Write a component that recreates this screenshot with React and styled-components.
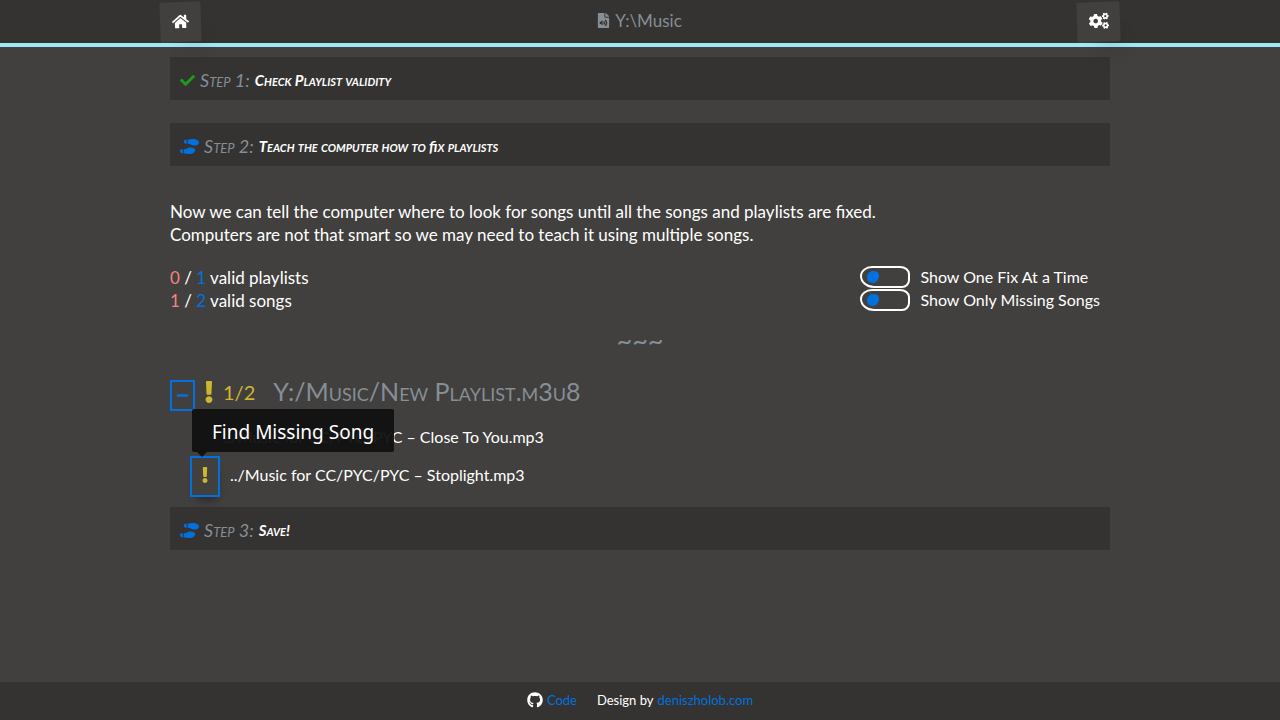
import React, { useState } from "react";
import styled, { createGlobalStyle, css } from "styled-components";
import {
  FaCheck,
  FaCogs,
  FaExclamation,
  FaFileAudio,
  FaGithub,
  FaHome,
  FaMinus,
  FaShoePrints,
} from "react-icons/fa";

const color = {
  page: "#41403e",
  bar: "#343331",
  line: "#9fe8f8",
  muted: "#868e96",
  blue: "#0071de",
  green: "#1f9a1f",
  red: "#f28482",
  yellow: "#cdb72a",
};

const GlobalStyle = createGlobalStyle`
  *, *::before, *::after { box-sizing: border-box; }
  body {
    margin: 0;
    background: ${color.page};
    color: #fff;
    font: 17px/23px Lato, sans-serif;
  }
  a { color: ${color.blue}; text-decoration: none; }
  svg { display: block; flex: none; }
`;

const Page = styled.div`
  display: flex;
  flex-direction: column;
  min-height: 100vh;
`;

const TopBar = styled.header`
  background: ${color.bar};
  border-bottom: 4px solid ${color.line};
`;

const TopBarInner = styled.div`
  display: flex;
  justify-content: space-between;
  align-items: center;
  max-width: 960px;
  height: 43px;
  margin: 0 auto;
`;

const BarButton = styled.button`
  display: flex;
  align-items: center;
  justify-content: center;
  width: ${(p) => (p.$wide ? 43 : 41)}px;
  height: 40px;
  padding: 0 0 2px;
  border: 0;
  border-radius: 2px;
  background: ${color.page};
  color: #fff;
  transform: rotate(-2deg);
  box-shadow: 12px 20px 20px -16px rgba(0, 0, 0, 0.4);
  cursor: pointer;
`;

const Location = styled.div`
  display: flex;
  align-items: center;
  gap: 4px;
  padding-bottom: 2px;
  color: ${color.muted};
`;

const Main = styled.main`
  flex: 1;
  width: 100%;
  max-width: 960px;
  margin: 0 auto;
  padding: 10px;
`;

const StepBar = styled.h2`
  display: flex;
  align-items: center;
  gap: 5px;
  height: 43px;
  margin: 0 0 ${(p) => (p.$last ? 0 : 23)}px;
  padding: 2px 10px 0;
  background: ${color.bar};
  font: italic 18px/24px Lato, sans-serif;
  font-variant-caps: small-caps;
  color: ${color.muted};
`;

const StepIcon = styled.span`
  display: flex;
  padding-top: 2px;
  color: ${(p) => p.$color};
`;

const StepName = styled.strong`
  font-size: 15px;
  color: #fff;
`;

const Ligature = styled.span`
  font-variant-caps: normal;
`;

const Intro = styled.p`
  margin: 34px 0 20px;
`;

const Summary = styled.div`
  display: flex;
  justify-content: space-between;
  padding-right: 10px;
`;

const Count = styled.span`
  color: ${(p) => p.$color};
`;

const Options = styled.div`
  display: flex;
  flex-direction: column;
`;

const Option = styled.label`
  display: flex;
  align-items: center;
  gap: 10px;
  height: 23px;
  padding-bottom: 2px;
  font-size: 16px;
  cursor: pointer;
`;

const Switch = styled.input`
  appearance: none;
  display: flex;
  align-items: center;
  width: 50px;
  height: 22px;
  margin: 0;
  padding: 0 5px;
  border: 2px solid #fff;
  border-radius: 12px 10px 8px 14px / 10px 8px 8px 12px;
  cursor: pointer;

  &::before {
    content: "";
    width: 12px;
    height: 12px;
    border-radius: 6px 5px 6px 7px / 7px 5px 8px 5px;
    background: ${color.blue};
  }

  &:checked { justify-content: flex-end; }
`;

const Divider = styled.div`
  margin: 16px 0 23px;
  color: ${color.muted};
  font-size: 27px;
  line-height: 24px;
  text-align: center;
`;

const PlaylistHead = styled.div`
  display: flex;
  align-items: center;
  height: 40px;
  margin-bottom: 6px;
`;

const outlined = css`
  display: flex;
  align-items: center;
  justify-content: center;
  flex: none;
  padding: 0;
  border: 2px solid ${color.blue};
  background: transparent;
  cursor: pointer;
`;

const CollapseButton = styled.button`
  ${outlined}
  width: 25px;
  height: 31px;
  margin-right: 3px;
  color: ${color.blue};
`;

const Progress = styled.span`
  display: flex;
  align-items: center;
  gap: 3px;
  margin-right: 18px;
  padding-bottom: 6px;
  color: ${color.yellow};
  font-size: 20px;
`;

const PlaylistName = styled.h3`
  margin: 0;
  padding-bottom: 8px;
  color: ${color.muted};
  font-size: 25px;
  font-weight: 400;
  line-height: 32px;
  font-variant-caps: small-caps;
`;

const SongList = styled.ul`
  margin: 0 0 10px;
  padding: 0 0 0 20px;
  list-style: none;
  font-size: 16px;
`;

const Song = styled.li`
  display: flex;
  align-items: center;
  height: ${(p) => (p.$missing ? 41 : 35)}px;
  padding: ${(p) => (p.$missing ? "0" : "0 0 4px 33px")};
`;

const SongName = styled.span`
  padding-bottom: ${(p) => (p.$missing ? 4 : 0)}px;
`;

const FixAnchor = styled.div`
  position: relative;
  margin-right: 10px;
`;

const FixButton = styled.button`
  ${outlined}
  width: 30px;
  height: 41px;
  padding-bottom: 3px;
  color: ${color.yellow};
  box-shadow: 2px 8px 8px -5px rgba(0, 0, 0, 0.4);
`;

const Tooltip = styled.span`
  position: absolute;
  left: 2px;
  bottom: 45px;
  padding: 11px 20px 8px;
  border-radius: 2px;
  background: rgba(17, 17, 17, 0.95);
  font: 19px/24px "Noto Sans", sans-serif;
  white-space: nowrap;

  &::after {
    content: "";
    position: absolute;
    top: 100%;
    left: 5px;
    border: 5px solid transparent;
    border-top-color: rgba(17, 17, 17, 0.95);
    border-bottom: 0;
  }
`;

const Footer = styled.footer`
  display: flex;
  align-items: center;
  justify-content: center;
  gap: 20px;
  height: 38px;
  padding-bottom: 2px;
  background: ${color.bar};
  font-size: 13px;
`;

const FooterItem = styled.span`
  display: flex;
  align-items: center;
  gap: 4px;
`;

function Step({ number, icon, tint, last, children }) {
  return (
    <StepBar $last={last}>
      <StepIcon $color={tint}>{icon}</StepIcon>
      <span>Step {number}:</span>
      <StepName>{children}</StepName>
    </StepBar>
  );
}

function ToggleOption({ label }) {
  const [on, setOn] = useState(false);
  return (
    <Option>
      <Switch type="checkbox" checked={on} onChange={() => setOn(!on)} />
      {label}
    </Option>
  );
}

export default function App() {
  return (
    <Page>
      <GlobalStyle />
      <TopBar>
        <TopBarInner>
          <BarButton type="button" aria-label="Home">
            <FaHome size={17} />
          </BarButton>
          <Location>
            <FaFileAudio size={15} />
            <span>Y:\Music</span>
          </Location>
          <BarButton type="button" aria-label="Settings" $wide>
            <FaCogs size={20} />
          </BarButton>
        </TopBarInner>
      </TopBar>

      <Main>
        <Step number={1} icon={<FaCheck size={15} />} tint={color.green}>
          Check Playlist validity
        </Step>
        <Step number={2} icon={<FaShoePrints size={19} />} tint={color.blue}>
          Teach the computer how to <Ligature>fi</Ligature>x playlists
        </Step>

        <Intro>
          Now we can tell the computer where to look for songs until all the songs and playlists are fixed.
          <br />
          Computers are not that smart so we may need to teach it using multiple songs.
        </Intro>

        <Summary>
          <div>
            <div>
              <Count $color={color.red}>0</Count> / <Count $color={color.blue}>1</Count> valid playlists
            </div>
            <div>
              <Count $color={color.red}>1</Count> / <Count $color={color.blue}>2</Count> valid songs
            </div>
          </div>
          <Options>
            <ToggleOption label="Show One Fix At a Time" />
            <ToggleOption label="Show Only Missing Songs" />
          </Options>
        </Summary>

        <Divider>~~~</Divider>

        <PlaylistHead>
          <CollapseButton type="button" aria-label="Collapse playlist">
            <FaMinus size={13} />
          </CollapseButton>
          <Progress>
            <FaExclamation size={22} />
            1/2
          </Progress>
          <PlaylistName>Y:/Music/New Playlist.m3u8</PlaylistName>
        </PlaylistHead>

        <SongList>
          <Song>
            <SongName>../Music for CC/PYC/PYC – Close To You.mp3</SongName>
          </Song>
          <Song $missing>
            <FixAnchor>
              <FixButton type="button" aria-describedby="fix-tip" aria-label="Find Missing Song">
                <FaExclamation size={16} />
              </FixButton>
              <Tooltip id="fix-tip" role="tooltip">Find Missing Song</Tooltip>
            </FixAnchor>
            <SongName $missing>../Music for CC/PYC/PYC – Stoplight.mp3</SongName>
          </Song>
        </SongList>

        <Step number={3} icon={<FaShoePrints size={19} />} tint={color.blue} last>
          Save!
        </Step>
      </Main>

      <Footer>
        <FooterItem>
          <FaGithub size={16} />
          <a href="#code">Code</a>
        </FooterItem>
        <FooterItem>
          Design by <a href="#author">deniszholob.com</a>
        </FooterItem>
      </Footer>
    </Page>
  );
}
